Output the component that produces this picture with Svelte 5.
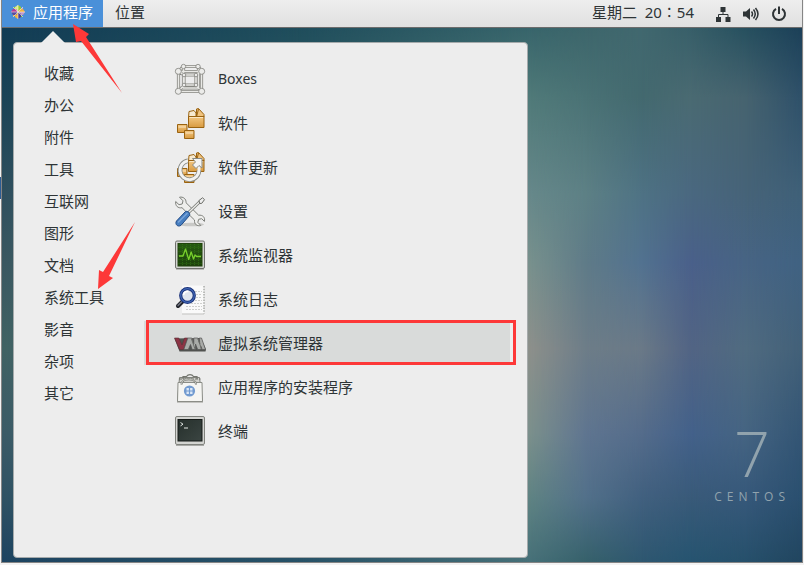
<script>
  const categories = ['收藏', '办公', '附件', '工具', '互联网', '图形', '文档', '系统工具', '影音', '杂项', '其它'];

  const apps = [
    { icon: 'boxes', name: 'Boxes' },
    { icon: 'software', name: '软件' },
    { icon: 'update', name: '软件更新' },
    { icon: 'settings', name: '设置' },
    { icon: 'monitor', name: '系统监视器' },
    { icon: 'log', name: '系统日志' },
    { icon: 'virt', name: '虚拟系统管理器' },
    { icon: 'installer', name: '应用程序的安装程序' },
    { icon: 'terminal', name: '终端' }
  ];

  let selected = $state('virt');

  // Wallpaper: vertical colour ramps, each one fading into the next across the screen.
  const rampStops = [0, 13, 31, 44, 60, 76, 88, 100];
  const ramps = [
    { at: 0, colors: ['#123c55', '#1b4457', '#2f4f5e', '#3a5861', '#406264', '#3b5b67', '#2f5264', '#1d4461'] },
    { at: 37, colors: ['#1f4d5c', '#2c5a62', '#476f70', '#577c78', '#66837e', '#55777a', '#3d6470', '#265167'] },
    { at: 66, colors: ['#38656b', '#507a79', '#66888a', '#78918d', '#8d908b', '#7b908c', '#5f8383', '#467078'] },
    { at: 73, colors: ['#3d666b', '#4a7275', '#5d8085', '#5f7b88', '#6d7d88', '#5f7590', '#52708a', '#36616b'] },
    { at: 80, colors: ['#41686f', '#43696f', '#4e7284', '#527290', '#6a7987', '#546c8b', '#41607f', '#2e5770'] },
    { at: 86, colors: ['#385f69', '#4a6a72', '#4a6880', '#4a608a', '#526484', '#43618a', '#395a79', '#265470'] },
    { at: 93, colors: ['#27505f', '#46636f', '#466378', '#476484', '#506b80', '#456482', '#36587a', '#26506b'] },
    { at: 100, colors: ['#1c4058', '#2e5069', '#3f6078', '#406282', '#426078', '#335574', '#2a4f6f', '#21455f'] }
  ];

  function rampStyle(index) {
    const { at, colors } = ramps[index];
    const ramp = colors.map((color, i) => `${color} ${rampStops[i]}%`).join(', ');
    const mask = index ? `linear-gradient(to right, transparent ${ramps[index - 1].at}%, #000 ${at}%)` : 'none';
    return `background: linear-gradient(${ramp}); mask-image: ${mask}`;
  }
</script>

{#snippet cartons()}
  <g stroke="#9a6310" stroke-width="1" stroke-linejoin="round">
    <path d="M14.500 10.500 15 4.500 20 3.500l2 2.500v4.500z" fill="#f7ead0" />
    <path d="M22.500 10V2l2-.5 5.500 6V10z" fill="#f0c27c" />
    <path d="m22.500 10 2-8" fill="none" />
    <rect x="14.500" y="9.500" width="15.500" height="11" fill="url(#carton)" />
    <rect x="3.500" y="17.500" width="9.500" height="8" fill="url(#carton)" />
    <rect x="10.500" y="23.500" width="9.500" height="8" fill="url(#carton)" />
  </g>
  <path d="M15.500 10.500h13.500M4.500 20h7.500M11.500 26h7.500" stroke="#fbe6c2" fill="none" />
{/snippet}

{#snippet appIcon(kind)}
  <svg class="icon" viewBox="0 0 32 32" aria-hidden="true">
    {#if kind === 'boxes'}
      <g fill="none" stroke="#85857f" stroke-width="3.200">
        <path d="M4.500 8.500h23v20h-23zM9.500 3.500h14.500M4.500 8.500l5-5M27.500 8.500l-3.500-5M10 12h12v10H10zM4.500 8.500 10 12M27.500 8.500 22 12M4.500 28.500 10 22M27.500 28.500 22 22M9.500 3.500V25h15V3.500" />
      </g>
      <g fill="none" stroke="#e9e9e6" stroke-width="1.600">
        <path d="M9.500 3.500V25h15V3.500M9.500 3.500h14.500M4.500 8.500l5-5M27.500 8.500l-3.500-5M10 12h12v10H10zM4.500 8.500 10 12M27.500 8.500 22 12M4.500 28.500 10 22M27.500 28.500 22 22M4.500 8.500h23v20h-23z" />
      </g>
      <g fill="#ececea" stroke="#83837d" stroke-width=".8">
        <circle cx="9.500" cy="3.500" r="2.200" /><circle cx="24" cy="3.500" r="2.200" />
        <circle cx="10" cy="12" r="1.800" /><circle cx="22" cy="12" r="1.800" />
        <circle cx="10" cy="22" r="1.800" /><circle cx="22" cy="22" r="1.800" />
        <circle cx="4.300" cy="8.300" r="3" /><circle cx="27.700" cy="8.300" r="3" />
        <circle cx="4.300" cy="28.300" r="3" /><circle cx="27.700" cy="28.300" r="3" />
      </g>
    {:else if kind === 'software'}
      {@render cartons()}
    {:else if kind === 'update'}
      {@render cartons()}
      <path d="M14 9.800A9.500 9.500 0 1 0 25 19" fill="none" stroke="#888a85" stroke-width="4.600" />
      <path d="M14 9.800A9.500 9.500 0 1 0 25 19V13" fill="none" stroke="#f2f2f0" stroke-width="3" />
      <path d="M18.500 7.500h9.500V17l-3-2.500-3 3-3.500-3.500 3-3z" fill="#f4f4f2" stroke="#888a85" stroke-linejoin="round" />
    {:else if kind === 'settings'}
      <ellipse cx="17" cy="29.500" rx="13" ry="1.800" fill="#c9c9c7" />
      <path d="M5.500 2.200 9 5.800 8.200 9 5 9.700 1.700 6.500c-.6 4.500 2.400 7 6.300 6.200L20.500 25c-.4 4.500 2.700 6.500 6.300 5.500l-3-3.200.9-3 3-.6 2.700 2.700c1-4-1.700-6.700-5.800-6.200L12 7.700C12.400 3.800 9 1.500 5.500 2.200z" fill="#eeeeec" stroke="#7e807b" stroke-width="1" stroke-linejoin="round" />
      <path d="M14 18 26 6.500" stroke="#777974" stroke-width="3" />
      <path d="M14 18 26 6.500" stroke="#eeeeec" stroke-width="1.300" />
      <path d="m25 5.500 3.500-2.700 2 1.800-2.700 3.700-2.200.2z" fill="#eee" stroke="#6a6c67" />
      <path d="M11.500 16.500c2.500-.8 5 1.500 4 4L7 30.300c-3 2.200-6.500-1-4.500-4.300z" fill="#477ec0" stroke="#204a87" />
      <path d="m4.500 27 8.500-8.500" stroke="#7ba6da" stroke-width="1.500" stroke-linecap="round" />
    {:else if kind === 'monitor'}
      <rect x="1.500" y="2" width="29" height="27.500" rx="1.500" fill="#d3d4d1" stroke="#6f716d" />
      <path d="M2 30.500h28" stroke="#bdbdbb" />
      <rect x="4" y="4.500" width="24" height="22.500" fill="url(#scope)" stroke="#20430c" />
      <path d="M8.500 5v22M12.500 5v22M16.500 5v22M20.500 5v22M24.500 5v22M4.500 8.500h23M4.500 12.500h23M4.500 16.500h23M4.500 20.500h23M4.500 24.500h23" stroke="#357c15" stroke-width=".6" stroke-dasharray="1 1" />
      <path d="M5 17h4l2.500-7 3.200 10.500 2.500-7.500 2.300 7 1.600-4 1.500 1.500H27" fill="none" stroke="#78d02c" stroke-width="1.300" stroke-linejoin="round" />
    {:else if kind === 'log'}
      <rect x="8" y="2.500" width="22" height="28" fill="#fafafa" />
      <path d="M30 3v27.500" stroke="#969894" stroke-width="1.200" stroke-dasharray="1.500 1.200" />
      <path d="M8 31h22" stroke="#c4c4c2" />
      <path d="M21 8.500h7M22 11.500h6M22 14.500h6M21 17.500h7M17 20.500h11M12 23.500h16M12 26.500h16" stroke="#cfd0cd" stroke-dasharray="2 1" />
      <path d="m9 18-5 5" stroke="#20222a" stroke-width="4" stroke-linecap="round" />
      <path d="m8 18.500-4 4" stroke="#777b86" stroke-width="1.200" stroke-linecap="round" />
      <circle cx="13.500" cy="12.500" r="6.800" fill="#dfe5ee" stroke="#1b3279" stroke-width="3.200" />
      <circle cx="13.500" cy="12.500" r="6.800" fill="none" stroke="#4067b5" stroke-width="1.200" />
      <path d="M9.500 12a4 4 0 0 1 5-3.500" fill="none" stroke="#fff" stroke-width="1.800" />
    {:else if kind === 'virt'}
      <path d="m.5 11.500 5 13h26l.5-2-5-11.500z" fill="#50524f" />
      <path d="M.5 11h4.300l3.200 7 2.500-7h3.300L9.800 22.500H5.500z" fill="#8c3445" stroke="#5c3138" stroke-width=".6" />
      <path d="m9.800 22.500 4-11.500h4l2 6V11h4l2 6-.5-6h2.200L31.500 22.500h-3.300l-1.200-3 .2 3h-3.500l-2.200-5.500v5.500h-3.300l-1.700-5-2.200 5z" fill="#a9aba8" stroke="#555" stroke-width=".7" />
      <path d="m17.500 12 3.500 10M24 12l3.500 10" stroke="#6b6d69" stroke-width="1" />
    {:else if kind === 'installer'}
      <path d="M5.500 6.500h20l3 24h-25z" fill="#d2d2cd" stroke="#81837d" />
      <path d="M9 8V5.500h3.500a4 3.800 0 0 1 7 0H23V8" fill="none" stroke="#74766f" stroke-width="1.200" />
      <path d="M4 11.500h24l.5 19h-25z" fill="#f5f5f2" stroke="#8b8d87" />
      <path d="M5 8h21.500" stroke="#70726c" stroke-dasharray="3 1" />
      <path d="M7.500 13.500c0-7 14.500-7 14.500 0" fill="none" stroke="#74766f" stroke-width="2" />
      <path d="M7.500 13c0-6.500 14.500-6.500 14.500 0" fill="none" stroke="#ddded9" stroke-width=".8" />
      <circle cx="15.500" cy="20" r="5.600" fill="#729bd0" />
      <path d="M12.500 17h2.400v2.400h-2.400zM16.100 17h2.400v2.400h-2.400zM12.500 20.600h2.400V23h-2.400zM16.100 20.600h2.400V23h-2.400z" fill="#dce8f6" />
      <path d="M3 31.500h26" stroke="#c3c3c0" />
    {:else}
      <rect x="1.500" y="1.500" width="29" height="28" rx="1.500" fill="#d3d4d1" stroke="#80827d" />
      <rect x="4" y="4.500" width="24" height="21.500" fill="url(#term)" stroke="#161b19" />
      <path d="m6.500 7.500 2.500 1.700-2.500 1.700M10 13h4" fill="none" stroke="#e3e8e4" stroke-width="1" />
      <path d="M2 30.500h28" stroke="#a9aaa7" />
    {/if}
  </svg>
{/snippet}

<svg class="defs" aria-hidden="true">
  <linearGradient id="carton" x2="0" y2="1"><stop stop-color="#f3c883" /><stop offset="1" stop-color="#d89a3f" /></linearGradient>
  <linearGradient id="scope" x2="0" y2="1"><stop stop-color="#275b12" /><stop offset="1" stop-color="#1c400c" /></linearGradient>
  <linearGradient id="term" x2="1" y2="1"><stop stop-color="#26302c" /><stop offset="1" stop-color="#3b4542" /></linearGradient>
</svg>

<div class="page">
  <div class="screen">
    <header>
      <button class="bar-item open" aria-expanded="true">
        <svg class="logo" viewBox="0 0 16 16" aria-hidden="true">
          <path d="M8 8V1l3 2v3zM8 8 3 3h4z" fill="#9ccd2a" />
          <path d="m8 8 5-5v4zM8 8h7l-2 3h-3z" fill="#c49acb" />
          <path d="M8 8V1L5 3v2z" fill="#dfe78c" />
          <path d="M8 8H1l2-3h3z" fill="#b83b92" />
          <path d="m8 8-5 5V9zM8 8v7l-3-2v-3z" fill="#f2b33b" />
          <path d="m8 8 5 5H9z" fill="#7fb531" />
          <path d="M8 8v7l3-2v-3z" fill="#4d3e8e" />
          <path d="M1 8l2 3h3l2-3z" fill="#5b4a9c" />
          <path d="M15 8l-2-3h-3L8 8z" fill="#efb040" />
          <path d="m3 3 10 10M13 3 3 13M8 1v14M1 8h14" stroke="#eee" stroke-width=".6" />
        </svg>
        应用程序
      </button>
      <button class="bar-item">位置</button>
      <button class="bar-item clock">星期二&nbsp; 20∶54</button>
      <button class="bar-item tray" aria-label="系统状态">
        <svg viewBox="0 0 16 16" aria-hidden="true">
          <path d="M5.500 1h5v5h-5zM1 11h5v5H1zM10.500 11h5v5h-5z" fill="#2e3436" />
          <path d="M8 5v4M3.500 12V8.500h9.500V12" fill="none" stroke="#2e3436" />
        </svg>
        <svg viewBox="0 0 16 16" aria-hidden="true">
          <path d="M0 5.500h3L7 2v12l-4-3.500H0z" fill="#2e3436" />
          <path d="M8.500 5.500q2 2.500 0 5M10.500 3.500q3.500 4.500 0 9M12.500 2q5 6 0 12" fill="none" stroke="#2e3436" stroke-width="1.500" />
        </svg>
        <svg viewBox="0 0 16 16" aria-hidden="true">
          <path d="M5 2.800a6 6 0 1 0 6 0M8 .5V8" fill="none" stroke="#2e3436" stroke-width="2" />
        </svg>
      </button>
    </header>

    <main>
      <div class="wallpaper" aria-hidden="true">
        {#each ramps as ramp, index (ramp.at)}
          <div style={rampStyle(index)}></div>
        {/each}
      </div>
      <section class="menu">
        <svg class="pointer" viewBox="0 0 24 12" aria-hidden="true">
          <path d="M0 12 12 0l12 12z" fill="#ededed" />
        </svg>
        <nav class="categories">
          {#each categories as category}
            <button>{category}</button>
          {/each}
        </nav>
        <div class="apps">
          {#each apps as app}
            <button
              class:selected={selected === app.icon}
              class:latin={app.icon === 'boxes'}
              onclick={() => (selected = app.icon)}
            >
              {@render appIcon(app.icon)}
              {app.name}
              {#if app.icon === 'virt'}<span class="frame"></span>{/if}
            </button>
          {/each}
        </div>
      </section>
      <div class="brand">
        <span class="seven">7</span>
        <span class="word">CENTOS</span>
      </div>
    </main>

    <svg class="arrows" viewBox="0 0 140 300" aria-hidden="true">
      <path d="m71 24 16 10-3 3 36 56-41-52-5 1zM96 289l1-19 4 2 32-50-26 54 4 2z" fill="#fd3838" />
    </svg>
  </div>
</div>

<style>
  :global(body) {
    background: #f0f0f0;
  }

  .defs {
    position: absolute;
    width: 0;
    height: 0;
  }

  .page {
    box-sizing: border-box;
    min-height: 100vh;
    padding: 0 1px 2px;
    display: flex;
    background: linear-gradient(#2c5c93, #2c5c93) 0 177px / 1px 22px no-repeat #f3f3f3;
    font: 15px/24px 'Noto Sans', 'Noto Sans CJK SC', sans-serif;
    color: #2e3436;
  }

  button {
    border: 0;
    padding: 0;
    background: none;
    font: inherit;
    color: inherit;
    text-align: left;
    white-space: nowrap;
  }

  .screen {
    position: relative;
    flex: 1;
    display: flex;
    flex-direction: column;
    border: solid #858585;
    border-width: 0 1px 1px;
  }

  header {
    display: flex;
    height: 27px;
    background: linear-gradient(#eeeeee, #e0e0e0);
    border-bottom: 1px solid #6c6c6c;
  }

  .bar-item {
    display: flex;
    align-items: center;
    padding: 0 12px 3px;
  }

  .open {
    padding: 0 10px 3px 8px;
    gap: 7px;
    background: #4a90d9;
    color: #fff;
  }

  .logo {
    width: 16px;
    height: 16px;
  }

  .clock {
    margin-left: auto;
    padding-right: 9px;
  }

  .tray {
    gap: 12px;
    padding-right: 15px;
    padding-bottom: 0;
  }

  .tray svg {
    width: 16px;
    height: 16px;
  }

  main {
    position: relative;
    flex: 1;
    display: flex;
    justify-content: space-between;
    padding: 14px 12px 4px 11px;
  }

  .wallpaper,
  .wallpaper div {
    position: absolute;
    inset: 0;
  }

  .menu {
    position: relative;
    box-sizing: border-box;
    width: 515px;
    display: flex;
    padding: 14px 17px 14px 0;
    border: 1px solid #a5aaab;
    border-radius: 4px;
    background: #ededed;
  }

  .pointer {
    position: absolute;
    left: 27px;
    top: -12px;
    width: 24px;
    height: 12px;
  }

  .categories {
    width: 130px;
    display: flex;
    flex-direction: column;
  }

  .categories button {
    height: 32px;
    padding: 0 0 1px 30px;
  }

  .apps {
    flex: 1;
    display: flex;
    flex-direction: column;
  }

  .apps button {
    position: relative;
    display: flex;
    align-items: center;
    gap: 12px;
    height: 44px;
    padding-left: 30px;
  }

  .apps .selected {
    background: #d9dbda;
  }

  .apps .latin {
    font-size: 14px;
  }

  .icon {
    width: 32px;
    height: 32px;
  }

  .frame {
    position: absolute;
    inset: -1px -6px 0 2px;
    border: 3px solid #fd3838;
  }

  .brand {
    position: relative;
    align-self: flex-end;
    display: flex;
    flex-direction: column;
    align-items: center;
    padding-bottom: 53px;
    color: #91a3ad;
  }

  .seven {
    font: 300 63px/72px 'Open Sans', sans-serif;
  }

  .word {
    font: 12px/16px 'Open Sans', sans-serif;
    letter-spacing: 5px;
  }

  .arrows {
    position: absolute;
    left: 0;
    top: 0;
    width: 140px;
    height: 300px;
    pointer-events: none;
  }
</style>
